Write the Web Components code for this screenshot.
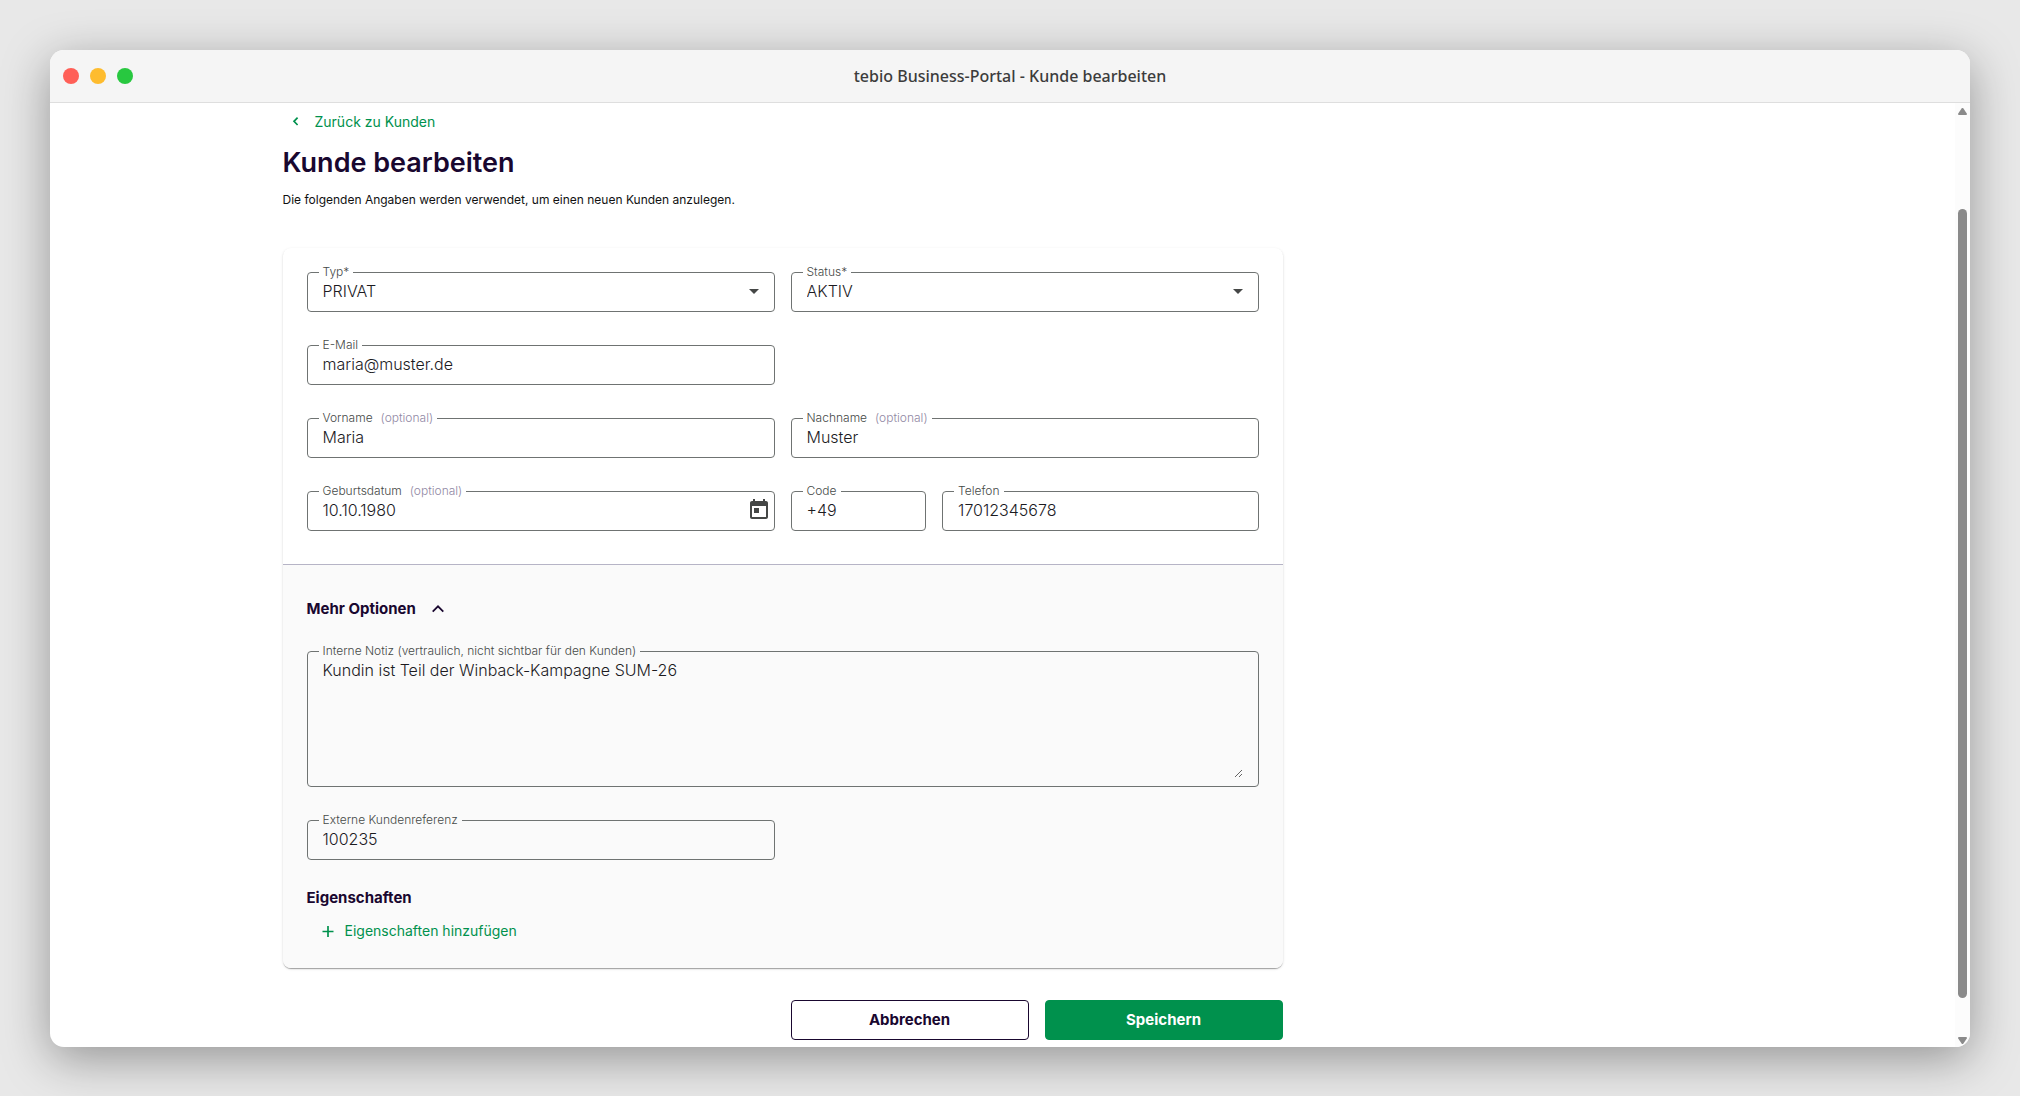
<!DOCTYPE html>
<html lang="de">
<head>
<meta charset="utf-8">
<meta name="viewport" content="width=device-width, initial-scale=1">
<title>tebio Business-Portal - Kunde bearbeiten</title>
<style>
  html, body { height: 100%; margin: 0; }
  body {
    box-sizing: border-box; padding: 50px 50px 49px; background: #e8e8e8; overflow: hidden;
    font-family: Inter, "Open Sans", sans-serif; color: #1c1b1f;
    --ink: #19072f; --green: #00914d; --outline: #6f7372; --label: #454947; --muted: #9088a4;
  }
</style>
</head>
<body>
<app-window heading="tebio Business-Portal - Kunde bearbeiten">
  <page-column>
    <back-link href="#kunden">Zurück zu Kunden</back-link>
    <page-header>
      <span slot="title">Kunde bearbeiten</span>
      <span slot="text">Die folgenden Angaben werden verwendet, um einen neuen Kunden anzulegen.</span>
    </page-header>
    <form-card>
      <form-row>
        <select-field label="Typ*" options="PRIVAT,GESCHÄFTLICH"></select-field>
        <select-field label="Status*" options="AKTIV,INAKTIV"></select-field>
      </form-row>
      <form-row><text-field label="E-Mail" type="email" value="maria@muster.de"></text-field></form-row>
      <form-row>
        <text-field label="Vorname" optional value="Maria"></text-field>
        <text-field label="Nachname" optional value="Muster"></text-field>
      </form-row>
      <form-row>
        <date-field label="Geburtsdatum" optional value="10.10.1980"></date-field>
        <phone-group>
          <text-field label="Code" value="+49"></text-field>
          <text-field label="Telefon" type="tel" value="17012345678"></text-field>
        </phone-group>
      </form-row>
      <more-options slot="more" heading="Mehr Optionen">
        <note-field label="Interne Notiz (vertraulich, nicht sichtbar für den Kunden)" value="Kundin ist Teil der Winback-Kampagne SUM-26"></note-field>
        <form-row><text-field label="Externe Kundenreferenz" value="100235"></text-field></form-row>
        <property-list heading="Eigenschaften">Eigenschaften hinzufügen</property-list>
      </more-options>
    </form-card>
    <form-actions>
      <action-button>Abbrechen</action-button>
      <action-button primary>Speichern</action-button>
    </form-actions>
  </page-column>
</app-window>

<script>
const define = (name, render, setup) => customElements.define(name, class extends HTMLElement {
  connectedCallback() {
    if (this.shadowRoot) return;
    const root = this.attachShadow({ mode: 'open' });
    const template = document.createElement('template');
    template.innerHTML = render(this);
    root.append(template.content.cloneNode(true));
    if (setup) setup(this, root);
  }
});

define('app-window', el => `
  <style>
    :host { display: flex; flex-direction: column; height: 100%; border-radius: 14px; overflow: hidden;
      background: #fff; box-shadow: 0 12px 48px rgba(0,0,0,.36); }
    header { flex: none; display: grid; grid-template-columns: 1fr auto 1fr; align-items: center;
      height: 52px; padding: 0 13px; background: #f5f5f5; border-bottom: 1px solid #dedede; }
    .lights { display: flex; gap: 11px; }
    .lights i { width: 16px; height: 16px; border-radius: 50%; background: #ff5f57; }
    .lights i:nth-child(2) { background: #febc2e; }
    .lights i:nth-child(3) { background: #28c840; }
    h1 { margin: 0; font: 500 16px/24px "Noto Sans", sans-serif; color: #3c3c3c; }
    .body { flex: 1; min-height: 0; display: flex; }
    main { flex: 1; min-width: 0; overflow: hidden; }
  </style>
  <header><div class="lights"><i></i><i></i><i></i></div><h1>${el.getAttribute('heading')}</h1></header>
  <div class="body"><main><slot></slot></main><scroll-rail></scroll-rail></div>`);

define('scroll-rail', () => `
  <style>
    :host { flex: none; display: flex; flex-direction: column; align-items: center; box-sizing: border-box;
      width: 15px; padding: 5px 0 3px; background: #fcfcfc; }
    svg { flex: none; width: 9px; height: 7px; fill: #8a8a8a; }
    .before { flex: 94; } .after { flex: 39; }
    .thumb { flex: 789; width: 9px; border-radius: 5px; background: #8a8a8a; }
  </style>
  <svg viewBox="0 0 9 7"><path d="M3.6.6a1.1 1.1 0 0 1 1.8 0L8.8 5.6Q9.3 7 8 7H1Q-.3 7 .2 5.6z"/></svg>
  <div class="before"></div><div class="thumb"></div><div class="after"></div>
  <svg viewBox="0 0 9 7"><path d="M3.6 6.4a1.1 1.1 0 0 0 1.8 0L8.8 1.4Q9.3 0 8 0H1Q-.3 0 .2 1.4z"/></svg>`);

define('page-column', () => `
  <style>
    :host { display: block; max-width: 1440px; margin: 0 auto; padding-top: 7px; }
    div { max-width: 1000px; }
  </style><div><slot></slot></div>`);

define('back-link', el => `
  <style>
    :host { display: block; }
    a { display: inline-flex; align-items: center; gap: 12px; padding-left: 4px; color: var(--green);
      font-size: 14px; line-height: 24px; text-decoration: none; }
    svg { width: 16px; height: 16px; fill: none; stroke: currentColor; stroke-width: 1.7; }
  </style>
  <a href="${el.getAttribute('href')}"><svg viewBox="0 0 16 16"><path d="M10.6 3.6 7 7.3l3.6 3.7"/></svg><slot></slot></a>`);

define('page-header', () => `
  <style>
    :host { display: block; padding: 9px 0 38px; }
    h2 { margin: 0 0 7px; font-size: 27px; line-height: 40px; font-weight: 600; color: var(--ink); }
    p { margin: 0; font-size: 12px; line-height: 20px; color: #111; }
  </style>
  <h2><slot name="title"></slot></h2><p><slot name="text"></slot></p>`);

define('form-card', () => `
  <style>
    :host { display: block; border-radius: 8px; overflow: hidden; background: #fff;
      box-shadow: 0 2px 1px -1px rgba(0,0,0,.2), 0 1px 1px rgba(0,0,0,.14), 0 1px 3px rgba(0,0,0,.12); }
    .main { display: flex; flex-direction: column; gap: 26px; padding: 17px 24px 33px; }
  </style>
  <div class="main"><slot></slot></div><slot name="more"></slot>`);

define('form-row', () => `
  <style>:host { display: grid; grid-template-columns: 1fr 1fr; gap: 16px; }</style><slot></slot>`);

define('phone-group', () => `
  <style>:host { display: grid; grid-template-columns: 3fr 7fr; gap: 16px; }</style><slot></slot>`);

const fieldStyles = `
  :host { display: block; min-width: 0; }
  fieldset { box-sizing: border-box; min-width: 0; margin: 0; padding: 0 11px 8px; border: 1px solid var(--outline);
    border-radius: 4px; display: block; }
  legend { padding: 0 4px; font-size: 12px; line-height: 14px; font-weight: 300; color: var(--label); }
  legend span { margin-left: 8px; color: var(--muted); }
  .row { display: flex; height: 24px; }
  input, select, textarea { flex: 1; box-sizing: border-box; min-width: 0; width: 100%; margin: 0; padding: 0 4px; border: 0;
    outline: 0; background: transparent; font: 300 16px/24px Inter, "Open Sans", sans-serif; color: #1c1b1f; }`;
const legend = el => `<legend><label for="control">${el.getAttribute('label')}${el.hasAttribute('optional') ? '<span>(optional)</span>' : ''}</label></legend>`;

define('text-field', el => `
  <style>${fieldStyles}</style>
  <fieldset>${legend(el)}<div class="row">
    <input id="control" type="${el.getAttribute('type') || 'text'}" value="${el.getAttribute('value')}">
  </div></fieldset>`);

define('select-field', el => `
  <style>${fieldStyles}
    fieldset { padding-right: 12px; }
    .row { display: grid; align-items: center; }
    .row > * { grid-area: 1 / 1; }
    select { appearance: none; padding-right: 24px; }
    svg { justify-self: end; width: 16px; height: 16px; fill: #454746; pointer-events: none; }
  </style>
  <fieldset>${legend(el)}<div class="row">
    <select id="control">${el.getAttribute('options').split(',').map(o => `<option>${o}</option>`).join('')}</select>
    <svg viewBox="0 0 16 16"><path d="M3 6h10l-5 5z"/></svg>
  </div></fieldset>`);

define('date-field', el => `
  <style>${fieldStyles}
    fieldset { padding-right: 3px; }
    button { flex: none; display: flex; padding: 0; border: 0; background: none; }
    svg { width: 24px; height: 24px; fill: #454746; }
  </style>
  <fieldset>${legend(el)}<div class="row">
    <input id="control" value="${el.getAttribute('value')}">
    <button type="button" aria-label="Kalender"><svg viewBox="0 0 24 24"><path d="M19 3h-1V1h-2v2H8V1H6v2H5c-1.11 0-2 .9-2 2v14c0 1.1.89 2 2 2h14c1.1 0 2-.9 2-2V5c0-1.1-.9-2-2-2zm0 16H5V8h14v11zM7 10h5v5H7z"/></svg></button>
  </div></fieldset>`);

define('note-field', el => `
  <style>${fieldStyles} fieldset { padding-right: 15px; } textarea { display: block; height: 120px; resize: vertical; }</style>
  <fieldset>${legend(el)}<textarea id="control">${el.getAttribute('value')}</textarea></fieldset>`);

define('more-options', el => `
  <style>
    :host { display: block; padding: 32px 24px 25px; background: #fafafa; border-top: 1px solid #b6b4c6; }
    button { display: flex; align-items: center; gap: 16px; margin: 0 0 23px; padding: 0; border: 0; background: none;
      font: 700 15px/24px Inter, "Open Sans", sans-serif; color: var(--ink); }
    svg { width: 12px; height: 12px; fill: none; stroke: currentColor; stroke-width: 1.8; }
    .content { display: flex; flex-direction: column; gap: 26px; }
    .content[hidden] { display: none; }
  </style>
  <button type="button" aria-expanded="true">${el.getAttribute('heading')}<svg viewBox="0 0 12 12"><path d="M.7 8.6 6 3.3l5.3 5.3"/></svg></button>
  <div class="content"><slot></slot></div>`, (el, root) => {
    const button = root.querySelector('button');
    button.addEventListener('click', () => {
      const content = root.querySelector('.content');
      content.hidden = !content.hidden;
      button.setAttribute('aria-expanded', String(!content.hidden));
    });
  });

define('property-list', el => `
  <style>
    :host { display: flex; flex-direction: column; align-items: flex-start; gap: 9px; }
    h3 { margin: 0; font-size: 15px; line-height: 24px; font-weight: 700; color: var(--ink); }
    button { display: flex; align-items: center; gap: 8px; padding: 0 0 0 12px; border: 0; background: none;
      font: 400 14px/24px Inter, "Open Sans", sans-serif; color: var(--green); }
    svg { width: 18px; height: 18px; fill: none; stroke: currentColor; stroke-width: 1.7; }
  </style>
  <h3>${el.getAttribute('heading')}</h3>
  <button type="button"><svg viewBox="0 0 18 18"><path d="M9 4v11M3.5 9.5h11"/></svg><slot></slot></button>`);

define('form-actions', () => `
  <style>
    :host { display: flex; justify-content: flex-end; gap: 16px; padding-top: 32px; }
    ::slotted(action-button) { flex: 0 1 238px; }
  </style><slot></slot>`);

define('action-button', el => `
  <style>
    :host { display: block; }
    button { width: 100%; height: 40px; padding: 0; border: 1px solid var(--ink); border-radius: 4px; background: #fff;
      font: 700 15px/24px Inter, "Open Sans", sans-serif; color: var(--ink); }
    :host([primary]) button { border-color: var(--green); background: var(--green); color: #fff; }
  </style><button type="button"><slot></slot></button>`);
</script>
</body>
</html>
